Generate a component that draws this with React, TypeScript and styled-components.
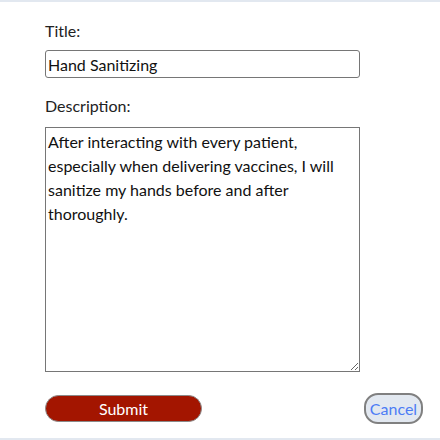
import React from "react";
import styled, { createGlobalStyle } from "styled-components";

const Global = createGlobalStyle`
  html, body { margin: 0; padding: 0; background: #e2e8f0; }
  body { font-family: "Lato", "Liberation Sans", sans-serif; }
  * { box-sizing: border-box; }
`;

const Panel = styled.form`
  margin-top: 2px;
  width: 440px;
  height: 436px;
  background: #ffffff;
  padding: 17px 17px 0 45px;
  display: flex;
  flex-direction: column;
`;

const Label = styled.label`
  display: block;
  font-size: 16px;
  line-height: 24px;
  color: #222222;
`;

const Field = styled.div<{ $gap: number; $after: number }>`
  display: flex;
  flex-direction: column;
  gap: ${(p) => p.$gap}px;
  margin-bottom: ${(p) => p.$after}px;
`;

const TextInput = styled.input`
  width: 315px;
  height: 28px;
  padding: 1px 2px;
  border: 1px solid #767676;
  border-radius: 3px;
  font-family: "Lato", "Liberation Sans", sans-serif;
  font-size: 16px;
  color: #111111;
  outline: none;
`;

const TextArea = styled.textarea`
  width: 315px;
  height: 245px;
  padding: 2px;
  border: 1px solid #767676;
  border-radius: 0;
  font-family: "Lato", "Liberation Sans", sans-serif;
  font-size: 16px;
  line-height: 24px;
  color: #111111;
  outline: none;
  resize: both;
`;

const Actions = styled.div`
  display: flex;
  justify-content: space-between;
  align-items: center;
  height: 31px;
`;

const SubmitButton = styled.button`
  width: 157px;
  height: 27px;
  border: 1px solid #8a8a8a;
  border-radius: 14px;
  background: #a31500;
  color: #ffffff;
  font-family: "Lato", "Liberation Sans", sans-serif;
  font-size: 16px;
  padding: 0;
  cursor: pointer;
`;

const CancelButton = styled.button`
  width: 59px;
  height: 31px;
  border: 2px solid #808080;
  border-radius: 14px;
  background: #e2e8f0;
  color: #4c7cf5;
  font-family: "Lato", "Liberation Sans", sans-serif;
  font-size: 16px;
  padding: 0;
  cursor: pointer;
`;

export default function App() {
  return (
    <>
      <Global />
      <Panel onSubmit={(e) => e.preventDefault()}>
        <Field $gap={7} $after={16}>
          <Label htmlFor="title">Title:</Label>
          <TextInput id="title" type="text" defaultValue="Hand Sanitizing" />
        </Field>
        <Field $gap={9} $after={21}>
          <Label htmlFor="desc">Description:</Label>
          <TextArea
            id="desc"
            defaultValue="After interacting with every patient, especially when delivering vaccines, I will sanitize my hands before and after thoroughly."
          />
        </Field>
        <Actions>
          <SubmitButton type="submit">Submit</SubmitButton>
          <CancelButton type="button">Cancel</CancelButton>
        </Actions>
      </Panel>
    </>
  );
}
